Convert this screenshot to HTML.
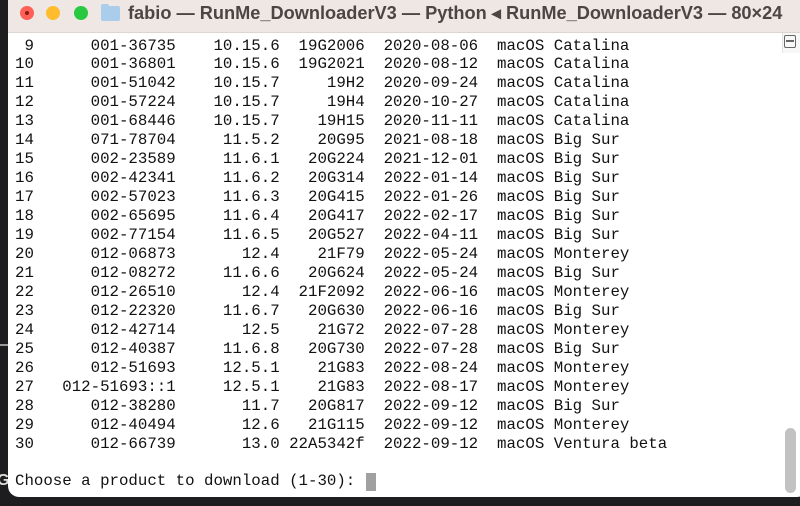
<!DOCTYPE html>
<html><head><meta charset="utf-8"><style>
html,body{margin:0;padding:0;width:800px;height:506px;overflow:hidden;background:#1d1d1f;}
.win{position:absolute;left:8px;top:-12px;width:800px;height:509px;background:#fff;border-radius:11px;overflow:hidden;}
.title{position:absolute;left:0;top:0;width:100%;height:44px;background:#efe7e3;border-bottom:1px solid #ddd5d1;}
.dot{position:absolute;top:18px;width:14px;height:14px;border-radius:50%;}
.tt{position:absolute;left:120px;top:15px;font:bold 18.2px "Liberation Sans",sans-serif;color:#4b4644;white-space:nowrap;}
pre{position:absolute;left:7px;top:48.5px;margin:0;font:15.75px/18.95px "Liberation Mono",monospace;color:#111;}
.cur{position:absolute;left:358px;top:485px;width:10px;height:18px;background:#a0a0a0;}
.thumb{position:absolute;left:777px;top:440px;width:11px;height:65px;border-radius:6px;background:#c2c2c2;}
</style></head><body>
<div style="position:absolute;left:0;top:344px;width:8px;height:2px;background:#999"></div>
<div style="position:absolute;left:-3px;top:472px;font:bold 16px 'Liberation Sans',sans-serif;color:#ddd">G</div>
<div class="win">
<div class="title">
<div class="dot" style="left:12px;background:#fe5f57"><div style="position:absolute;left:5px;top:5px;width:4px;height:4px;border-radius:50%;background:#8a1a14"></div></div>
<div class="dot" style="left:38px;background:#febc2e"></div>
<div class="dot" style="left:66px;background:#28c840"></div>
<div style="position:absolute;left:93px;top:18px;width:19px;height:15px;background:#a9cdeb;border-radius:2px"></div>
<div style="position:absolute;left:93px;top:16px;width:8px;height:4px;background:#a9cdeb;border-radius:2px 2px 0 0"></div>
<div class="tt">fabio — RunMe_DownloaderV3 — Python ◂ RunMe_DownloaderV3 — 80×24</div>
</div>
<div style="position:absolute;left:774px;top:45px;width:1px;height:20px;background:#e2e2e2"></div>
<div style="position:absolute;left:775px;top:45px;width:25px;height:20px;background:#f7f7f7"></div>
<div style="position:absolute;left:776px;top:47px;width:12px;height:13px;border:1.5px solid #666;border-radius:2px;box-sizing:border-box"></div>
<div style="position:absolute;left:778px;top:52px;width:8px;height:1.5px;background:#666"></div>
<pre> 9      001-36735    10.15.6  19G2006  2020-08-06  macOS Catalina
10      001-36801    10.15.6  19G2021  2020-08-12  macOS Catalina
11      001-51042    10.15.7     19H2  2020-09-24  macOS Catalina
12      001-57224    10.15.7     19H4  2020-10-27  macOS Catalina
13      001-68446    10.15.7    19H15  2020-11-11  macOS Catalina
14      071-78704     11.5.2    20G95  2021-08-18  macOS Big Sur
15      002-23589     11.6.1   20G224  2021-12-01  macOS Big Sur
16      002-42341     11.6.2   20G314  2022-01-14  macOS Big Sur
17      002-57023     11.6.3   20G415  2022-01-26  macOS Big Sur
18      002-65695     11.6.4   20G417  2022-02-17  macOS Big Sur
19      002-77154     11.6.5   20G527  2022-04-11  macOS Big Sur
20      012-06873       12.4    21F79  2022-05-24  macOS Monterey
21      012-08272     11.6.6   20G624  2022-05-24  macOS Big Sur
22      012-26510       12.4  21F2092  2022-06-16  macOS Monterey
23      012-22320     11.6.7   20G630  2022-06-16  macOS Big Sur
24      012-42714       12.5    21G72  2022-07-28  macOS Monterey
25      012-40387     11.6.8   20G730  2022-07-28  macOS Big Sur
26      012-51693     12.5.1    21G83  2022-08-24  macOS Monterey
27   012-51693::1     12.5.1    21G83  2022-08-17  macOS Monterey
28      012-38280       11.7   20G817  2022-09-12  macOS Big Sur
29      012-40494       12.6   21G115  2022-09-12  macOS Monterey
30      012-66739       13.0 22A5342f  2022-09-12  macOS Ventura beta

Choose a product to download (1-30): </pre>
<div class="cur"></div>
<div class="thumb"></div>
</div>
</body></html>
